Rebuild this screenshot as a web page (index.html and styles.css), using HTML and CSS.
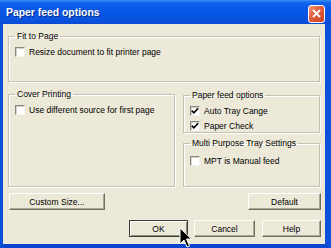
FILE: index.html
```html
<!DOCTYPE html>
<html lang="en">
<head>
    <meta charset="UTF-8">
    <title>Paper feed options</title>
    <link rel="stylesheet" href="styles.css">
</head>
<body>
    <div class="window">
        <div class="titlebar">
            <span class="title">Paper feed options</span>
            <span class="close">
                <svg width="9" height="9" viewBox="0 0 9 9"><path d="M1 1 L8 8 M8 1 L1 8" stroke="#fff" stroke-width="1.8"/></svg>
            </span>
        </div>
        <div class="frame">
            <fieldset class="group fit">
                <legend>Fit to Page</legend>
                <div class="check"><span class="box"></span>Resize document to fit printer page</div>
            </fieldset>

            <div class="row">
                <fieldset class="group cover">
                    <legend>Cover Printing</legend>
                    <div class="check"><span class="box"></span>Use different source for first page</div>
                </fieldset>
                <div class="col">
                    <fieldset class="group feed">
                        <legend>Paper feed options</legend>
                        <div class="check"><span class="box"><svg width="8" height="8" viewBox="0 0 8 8"><path d="M0.8 3.6 L2.9 5.8 L7.2 1.2" fill="none" stroke="#000" stroke-width="1.6"/></svg></span>Auto Tray Cange</div>
                        <div class="check"><span class="box"><svg width="8" height="8" viewBox="0 0 8 8"><path d="M0.8 3.6 L2.9 5.8 L7.2 1.2" fill="none" stroke="#000" stroke-width="1.6"/></svg></span>Paper Check</div>
                    </fieldset>
                    <fieldset class="group mpt">
                        <legend>Multi Purpose Tray Settings</legend>
                        <div class="check"><span class="box"></span>MPT is Manual feed</div>
                    </fieldset>
                </div>
            </div>

            <div class="btn-row">
                <button class="btn custom">Custom Size...</button>
                <button class="btn default-btn">Default</button>
            </div>
            <div class="btn-row end">
                <button class="btn ok">OK</button>
                <button class="btn cancel">Cancel</button>
                <button class="btn help">Help</button>
            </div>
        </div>
        <!-- mouse pointer over the OK button -->
        <svg class="cursor" width="14" height="21" viewBox="0 0 14 21">
            <path d="M1 1 L1 17 L5 13 L8 20 L10.5 19 L7.5 12 L12.5 12 Z" fill="#000" stroke="#fff" stroke-width="1"/>
        </svg>
    </div>
</body>
</html>
```

FILE: styles.css
```css
body {
    margin: 0;
    font-family: "Liberation Sans", Arial, sans-serif;
    font-size: 8.5px;
    color: #000;
    background: #fff;
}

.window {
    position: relative;
    width: 331px;
    height: 248px;
    display: flex;
    flex-direction: column;
    overflow: hidden;
}

.titlebar {
    height: 24px;
    flex: none;
    display: flex;
    align-items: center;
    justify-content: space-between;
    padding: 1px 6px 0 6px;
    box-sizing: border-box;
    background: linear-gradient(#3a8cf6 0, #0f62ea 3px, #0756e6 45%, #0a54df 80%, #0a4ad4 100%);
}

.title {
    color: #fff;
    font-weight: bold;
    font-size: 10.4px;
    text-shadow: 1px 1px 0 #0a2f8c;
}

.close {
    width: 17px;
    height: 18px;
    box-sizing: border-box;
    border: 1px solid #fff;
    border-radius: 3px;
    background: linear-gradient(135deg, #f19a7c 0, #e3603e 40%, #cc4322 100%);
    display: flex;
    align-items: center;
    justify-content: center;
    margin-top: 2px;
}

.frame {
    flex: 1;
    background: #ece9d8;
    border-left: 3px solid #0b50dc;
    border-right: 6px solid #0b50dc;
    border-bottom: 4px solid #0a46cf;
    padding: 6px 4px 0 5px;
    display: flex;
    flex-direction: column;
}

.group {
    margin: 0 1px 0 0;
    padding: 2px 6px 0 6px;
    border: 1px solid #c3c1b2;
    box-shadow: inset 1px 1px 0 #fff, 1px 1px 0 #fff;
    min-width: 0;
    box-sizing: border-box;
}

.group legend {
    padding: 0 2px;
    line-height: 12px;
}

.fit {
    height: 52px;
}

.row {
    display: flex;
    gap: 7px;
    height: 99px;
    margin-top: 6px;
}

.cover {
    width: 167px;
}

.col {
    flex: 1;
    display: flex;
    flex-direction: column;
    gap: 4px;
    padding-top: 1px;
}

.feed {
    height: 44px;
}

.mpt {
    flex: 1;
    padding-top: 4px;
}

.check {
    display: flex;
    align-items: center;
    gap: 4px;
    height: 12px;
    margin-top: 2px;
    margin-bottom: 3px;
}

.box {
    width: 10px;
    height: 10px;
    box-sizing: border-box;
    background: #fff;
    border-top: 1px solid #8a887c;
    border-left: 1px solid #8a887c;
    border-right: 1px solid #f4f3ee;
    border-bottom: 1px solid #f4f3ee;
    box-shadow: inset 1px 1px 0 #d4d0c8;
    display: flex;
    align-items: center;
    justify-content: center;
}

.btn-row {
    display: flex;
    justify-content: space-between;
    margin-top: 6px;
    padding-left: 1px;
}

.btn-row.end {
    justify-content: flex-end;
    gap: 6px;
    margin-top: 10px;
}

.btn {
    height: 17px;
    padding: 0;
    font-family: inherit;
    font-size: 8.5px;
    color: #000;
    background: #ece9d8;
    border-top: 1px solid #fff;
    border-left: 1px solid #fff;
    border-right: 1px solid #716f64;
    border-bottom: 1px solid #716f64;
    box-shadow: inset -1px -1px 0 #aca899;
}

.custom {
    width: 96px;
}

.default-btn {
    width: 73px;
}

.ok {
    width: 59px;
    border: 1px solid #3c3b36;
    box-shadow: inset 1px 1px 0 #fff, inset -1px -1px 0 #8e8c80;
}

.cancel {
    width: 61px;
}

.help {
    width: 59px;
    margin-left: 1px;
}

.cursor {
    position: absolute;
    left: 179px;
    top: 227px;
}
```
